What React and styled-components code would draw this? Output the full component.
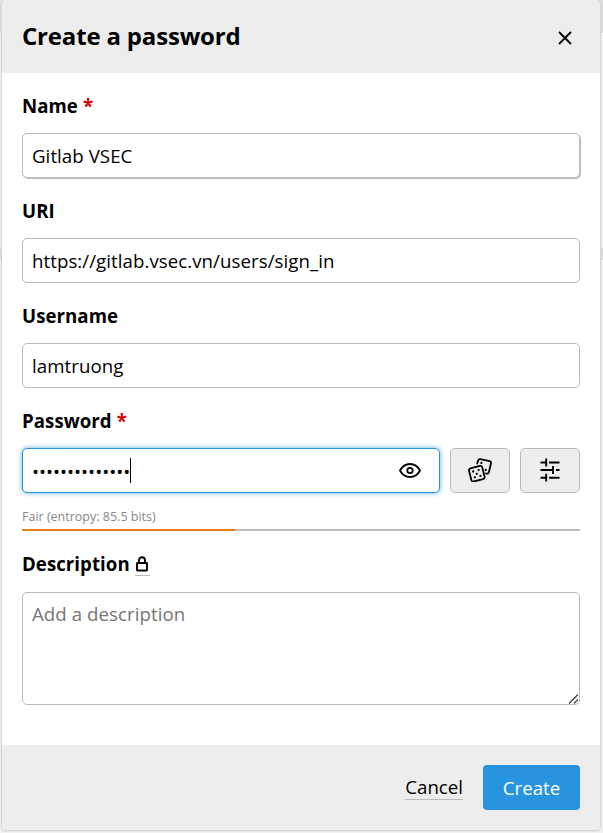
import React from "react";
import styled, { createGlobalStyle, css } from "styled-components";

const GlobalStyle = createGlobalStyle`
  * { box-sizing: border-box; }
  body {
    margin: 0;
    background: #f2f2f2;
    color: #000;
    font-family: "Open Sans", "Noto Sans", sans-serif;
    font-size: 18.67px;
    overflow: hidden;
  }
`;

const Backdrop = styled.main`
  width: 603px;
  height: 833px;
  padding: 0 2px 3px 1px;
  background: linear-gradient(#e2e2e2 0 34px, #f4f4f4 34px 249px, #e1e1e5 249px 261px, #f4f4f4 261px);
`;

const Dialog = styled.form`
  display: flex;
  flex-direction: column;
  width: 600px;
  height: 832px;
  margin-top: -1px;
  border: 1px solid #d6d6d6;
  border-radius: 5px;
  background: #fff;
  box-shadow: 0 2px 4px rgba(0, 0, 0, 0.08);
  overflow: hidden;
`;

const Header = styled.header`
  display: flex;
  align-items: center;
  justify-content: space-between;
  flex: 0 0 73px;
  padding: 0 28px 0 20px;
  background: #ededed;
`;

const Title = styled.h2`
  margin: 0 0 2px;
  font-size: 24px;
  line-height: 32px;
  font-weight: 700;
  letter-spacing: -0.18px;
`;

const CloseButton = styled.button`
  display: flex;
  padding: 3px 0 0;
  border: 0;
  background: none;
`;

const Body = styled.div`
  flex: 1;
  padding: 0 20px;
`;

const Label = styled.label`
  display: flex;
  align-items: center;
  height: ${(p) => p.$height || 60}px;
  padding-bottom: ${(p) => (p.$height ? 7 : 6)}px;
  padding-top: 10px;
  font-size: 18.67px;
  font-weight: 700;
  letter-spacing: 0.04px;
`;

const Required = styled.span`
  margin-left: 5px;
  color: #d40101;
`;

const fieldBox = css`
  display: block;
  width: 100%;
  border: 1px solid #bbb;
  border-radius: 5px;
  background: #fff;
  color: #000;
  font: 400 18.67px "Open Sans", "Noto Sans", sans-serif;
  letter-spacing: 0.06px;
  outline: none;
`;

const Input = styled.input`
  ${fieldBox}
  height: 45px;
  padding: 0 9px;
  box-shadow: ${(p) => (p.$raised ? "1px 1px 1px #bbb" : "none")};
`;

const PasswordRow = styled.div`
  display: flex;
  gap: 10px;
`;

const PasswordField = styled.div`
  ${fieldBox}
  display: flex;
  align-items: center;
  flex: 1;
  width: auto;
  height: 45px;
  padding: 0 18px 0 9px;
  border-color: #2894df;
  box-shadow: 0 0 5px rgba(40, 148, 223, 0.75);
`;

const Bullets = styled.span`
  padding-top: 2px;
  letter-spacing: 0;
`;

const Caret = styled.span`
  width: 1px;
  height: 25px;
  margin-right: auto;
  background: #000;
`;

const SquareButton = styled.button`
  display: flex;
  align-items: center;
  justify-content: center;
  width: 60px;
  height: 45px;
  padding: 0 1px 2px 0;
  border: 1px solid #bbb;
  border-radius: 5px;
  background: #ededed;
`;

const Strength = styled.div`
  height: 38px;
  padding-top: 15px;
  color: #888;
  font-size: 12.5px;
  line-height: 18px;
`;

const Meter = styled.div`
  height: 2px;
  margin-top: 3px;
  background: #bbb;
`;

const MeterFill = styled.div`
  width: 213px;
  height: 2px;
  background: #e87f15;
`;

const LockMark = styled.span`
  display: flex;
  justify-content: center;
  width: 15px;
  height: 22px;
  margin: 3px 0 0 5px;
  padding-top: 2px;
  border-bottom: 1px solid #bbb;
`;

const TextAreaWrap = styled.div`
  position: relative;
`;

const TextArea = styled.textarea`
  ${fieldBox}
  height: 113px;
  padding: 8px 9px;
  line-height: 26px;
  resize: none;
  &::placeholder { color: #757575; opacity: 1; }
`;

const ResizeGrip = styled.svg`
  position: absolute;
  right: 1px;
  bottom: 1px;
`;

const Footer = styled.footer`
  display: flex;
  align-items: center;
  justify-content: flex-end;
  gap: 20px;
  flex: 0 0 85px;
  padding: 0 20px;
  background: #ededed;
`;

const CancelLink = styled.a`
  height: 26px;
  margin-bottom: 2px;
  border-bottom: 1px solid #bbb;
  line-height: 26px;
`;

const CreateButton = styled.button`
  width: 97px;
  height: 45px;
  padding: 0;
  border: 0;
  border-radius: 4px;
  background: #2894df;
  color: #fff;
  font: 400 18.67px "Open Sans", "Noto Sans", sans-serif;
`;

const CloseIcon = () => (
  <svg width="14" height="14" viewBox="0 0 14 14" fill="none" stroke="#000" strokeWidth="1.8">
    <path d="M1 1L13 13M13 1L1 13" />
  </svg>
);

const EyeIcon = () => (
  <svg width="22" height="16" viewBox="0 0 22 16" fill="none" stroke="#000" strokeWidth="1.8">
    <path d="M1 7.500C3 3.700 6.500 1 11 1S19 3.700 21 7.500C19 11.300 15.500 14 11 14S3 11.300 1 7.500Z" />
    <circle cx="11" cy="7.500" r="2.7" />
  </svg>
);

const DiceIcon = () => (
  <svg width="24" height="24" viewBox="0 0 24 24" fill="none" stroke="#000" strokeWidth="1.8" strokeLinejoin="round">
    <rect x="2" y="8.900" width="13.600" height="13.600" rx="2" transform="rotate(-14 8.800 15.700)" />
    <path d="M9 6.200L10.200 2.300Q10.700 .8 12.300 1.100L21.700 3.100Q23.300 3.500 23 5.100L20.900 14.200Q20.500 15.900 18.900 15.600L17.200 15.300" />
    <g fill="#000" stroke="none">
      <circle cx="5.200" cy="13.500" r="1.150" />
      <circle cx="10.600" cy="12.100" r="1.150" />
      <circle cx="8.800" cy="15.800" r="1.150" />
      <circle cx="6.900" cy="19.300" r="1.150" />
      <circle cx="12.400" cy="17.900" r="1.150" />
      <circle cx="13.400" cy="4.900" r="1.150" />
      <circle cx="17.700" cy="12" r="1.150" />
    </g>
  </svg>
);

const SlidersIcon = () => (
  <svg width="20" height="24" viewBox="0 0 20 24" fill="none" stroke="#000" strokeWidth="1.900">
    <path d="M.5 4.500H7M9 4.500H19.500M6.200 .5V8.500M.5 12H13M16 12H19.500M13 8V16M.5 19.700H7M9 19.700H19.500M6.200 15.700V23.500" />
  </svg>
);

const LockIcon = () => (
  <svg width="12" height="16" viewBox="0 0 12 16" fill="none" stroke="#000" strokeWidth="1.900">
    <rect x="1" y="7" width="10" height="7.500" rx=".5" />
    <path d="M3 7V4.200a3 3 0 0 1 6 0V7" />
  </svg>
);

export default function App() {
  return (
    <>
      <GlobalStyle />
      <Backdrop>
        <Dialog onSubmit={(e) => e.preventDefault()}>
          <Header>
            <Title>Create a password</Title>
            <CloseButton type="button" aria-label="Close"><CloseIcon /></CloseButton>
          </Header>
          <Body>
            <Label htmlFor="name">Name<Required>*</Required></Label>
            <Input id="name" defaultValue="Gitlab VSEC" $raised />
            <Label htmlFor="uri">URI</Label>
            <Input id="uri" defaultValue="https://gitlab.vsec.vn/users/sign_in" spellCheck={false} />
            <Label htmlFor="username">Username</Label>
            <Input id="username" defaultValue="lamtruong" spellCheck={false} />
            <Label>Password<Required>*</Required></Label>
            <PasswordRow>
              <PasswordField>
                <Bullets>{"•".repeat(14)}</Bullets>
                <Caret />
                <EyeIcon />
              </PasswordField>
              <SquareButton type="button" aria-label="Generate"><DiceIcon /></SquareButton>
              <SquareButton type="button" aria-label="Options"><SlidersIcon /></SquareButton>
            </PasswordRow>
            <Strength>
              Fair (entropy: 85.5 bits)
              <Meter><MeterFill /></Meter>
            </Strength>
            <Label htmlFor="description" $height={61}>
              Description<LockMark><LockIcon /></LockMark>
            </Label>
            <TextAreaWrap>
              <TextArea id="description" placeholder="Add a description" />
              <ResizeGrip width="11" height="11" viewBox="0 0 11 11" stroke="#444" strokeWidth="1.300">
                <path d="M1 10.500L10 1.500M6 10.500L10 6.500" />
              </ResizeGrip>
            </TextAreaWrap>
          </Body>
          <Footer>
            <CancelLink>Cancel</CancelLink>
            <CreateButton type="submit">Create</CreateButton>
          </Footer>
        </Dialog>
      </Backdrop>
    </>
  );
}
